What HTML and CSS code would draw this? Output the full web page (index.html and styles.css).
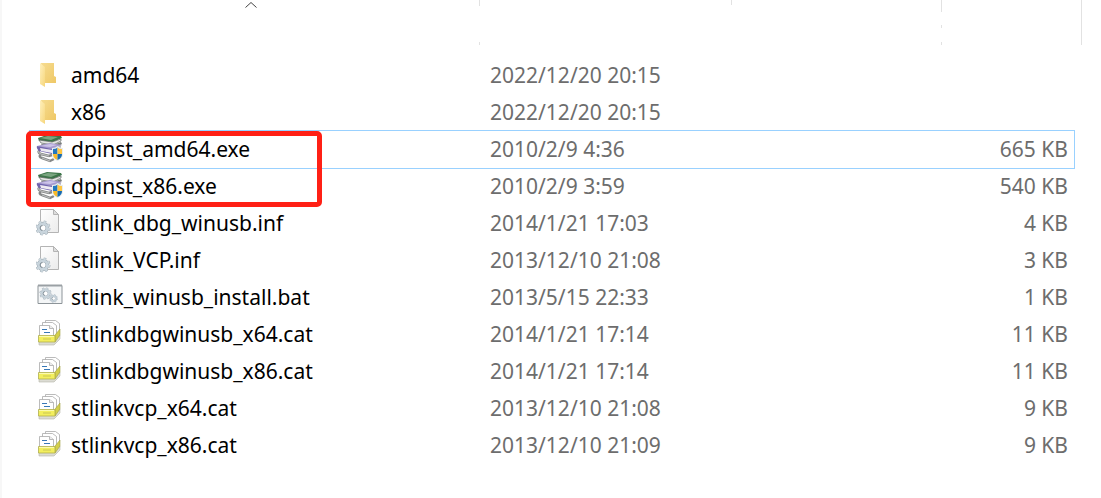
FILE: index.html
```html
<!DOCTYPE html>
<html lang="zh-CN">
<head>
  <meta charset="UTF-8" />
  <meta name="viewport" content="width=device-width, initial-scale=1.0" />
  <title>Files</title>
  <link rel="stylesheet" href="styles.css">
</head>
<body>
  <svg class="defs" aria-hidden="true">
    <linearGradient id="folderFace" x1="0" y1="0" x2="1" y2="1">
      <stop offset="0" stop-color="#fff0bd"/><stop offset="1" stop-color="#f6d67c"/>
    </linearGradient>
    <linearGradient id="folderBack" x1="0" y1="0" x2="1" y2="1">
      <stop offset="0" stop-color="#f6dc90"/><stop offset="1" stop-color="#efc866"/>
    </linearGradient>
    <linearGradient id="paper" x1="0" y1="0" x2="1" y2="1">
      <stop offset="0" stop-color="#ffffff"/><stop offset="1" stop-color="#ebebeb"/>
    </linearGradient>
    <symbol id="folder" viewBox="0 0 28 28">
      <path d="M5 2h13v13l2 1v6H8z" fill="url(#folderBack)"/>
      <path d="M4 2l5 4v20l-5-3z" fill="url(#folderFace)"/>
    </symbol>
    <symbol id="exe" viewBox="0 0 28 28">
      <path d="M5 14q-5 3 0 5l8 2 3-1M5 19q-3 3 1 4l8 3 4-2" fill="none" stroke="#858787" stroke-width="2.500"/>
      <path d="M5 14q-5 3 0 5l8 2M6 23l8 3" fill="none" stroke="#c6c8c8" stroke-width=".9"/>
      <path d="M2 3l9-3 14 1 1 2-9 4L3 6z" fill="#3c7548"/>
      <path d="M4 3l8-2 10 1-7 3z" fill="#7aa580"/>
      <path d="M3 5l13 2 9-3v2l-8 4-12-2z" fill="#e4e6e2" stroke="#5f6461" stroke-width=".7"/>
      <path d="M5 9l12 1 8-3 1 2-9 5-10-2z" fill="#797d7c"/>
      <path d="M1 11l13-3 12 2-9 4-12-1z" fill="#a599d0"/>
      <path d="M4 11l10-2 7 1-7 2z" fill="#cdc5e8"/>
      <path d="M1 11l15 3v5L3 16q-3-3-2-5z" fill="#7164ad"/>
      <path d="M4 13l12 2v3L5 16z" fill="#eeebf2"/>
      <path d="M16 14l9-4v3l-8 5z" fill="#b8b6c1"/>
      <path d="M16 13c3 0 4-1 5.500-2 1.500 1 3 2 5.500 2v6c0 4-3 6-5.500 7-3-1-5.500-3-5.500-7z" fill="#e7edf0"/>
      <path d="M17 14q3 0 4.500-1.500V19H17z" fill="#2478be"/>
      <path d="M21.500 12.500Q23 14 26 14v5h-4.500z" fill="#ffc642"/>
      <path d="M17 19h4.500v6Q17 23 17 19z" fill="#f9b928"/>
      <path d="M21.500 19H26q0 4-4.500 6z" fill="#176bb0"/>
    </symbol>
    <symbol id="cog" viewBox="-8 -8 16 16">
      <circle r="6.300" fill="none" stroke="#a9b4bc" stroke-width="2.400" stroke-dasharray="2.500 2.448"/>
      <circle r="4.300" fill="none" stroke="#a3afb8" stroke-width="3.800"/>
      <circle r="6" fill="none" stroke="#cdd8df" stroke-width="2" stroke-dasharray="2.100 2.612"/>
      <circle r="4.300" fill="none" stroke="#c8d4dc" stroke-width="2.600"/>
      <circle r="2.400" fill="#fff"/>
      <path d="M-.500-2.400a2.400 2.400 0 0 0 0 4.800" fill="none" stroke="#7f8b94"/>
    </symbol>
    <symbol id="inf" viewBox="0 0 28 28">
      <path d="M4.500.500h13l5 5v18h-18z" fill="url(#paper)" stroke="#b4b4b4"/>
      <path d="M17.500.500v5h5z" fill="#ddd" stroke="#b4b4b4"/>
      <use href="#cog" x="-1" y="11" width="16" height="16"/>
    </symbol>
    <symbol id="bat" viewBox="0 0 28 28">
      <path d="M2 2.500h24v18H2z" fill="#f4f6f7" stroke="#8d9499"/>
      <path d="M2 2.500h24" stroke="#9aa0a4" stroke-width="2"/>
      <use href="#cog" x="3" y="4" width="13" height="13"/>
      <use href="#cog" x="13" y="11" width="9" height="9"/>
    </symbol>
    <symbol id="cat" viewBox="0 0 28 28">
      <path d="M9.500.500h10l4 3v13h-14z" fill="#fff" stroke="#aaa" stroke-width=".8"/>
      <path d="M6.500 2.500h10l4 3v13h-14z" fill="#fff" stroke="#aaa" stroke-width=".8"/>
      <path d="M3.500 5.500h10l4 3v8h-14z" fill="#fff" stroke="#aaa" stroke-width=".8"/>
      <path d="M13.500 5.500v3h4" fill="#eee" stroke="#aaa" stroke-width=".8"/>
      <path d="M6 9.500h5M8 12.500h6" stroke="#3978b6"/>
      <path d="M18 21l6-6v4l-6 6H3v-4z" fill="#dcdcd4" stroke="#b5b5aa" stroke-width=".6"/>
      <path d="M19 15l5-6v6l-5 7z" fill="#d3cf4b" stroke="#a3a145" stroke-width=".6"/>
      <path d="M2.500 15.500H19v6.500H2.500z" fill="#f3ef5d" stroke="#b0ae4f" stroke-width=".8"/>
      <path d="M3 16.500h15" stroke="#fbfab0"/>
      <path d="M7 19h8" stroke="#c9c558"/>
    </symbol>
  </svg>

  <main class="explorer">
    <div class="columns">
      <div class="column column-name">
        <svg class="sort" viewBox="0 0 12 6"><path d="M.500 5.500L6 .500l5.500 5" fill="none" stroke="#444"/></svg>
      </div>
      <div class="column column-date"></div>
      <div class="column column-type"></div>
      <div class="column column-size"></div>
    </div>

    <div class="list">
      <table class="files">
        <tbody>
          <tr><td class="name"><svg class="icon"><use href="#folder"/></svg>amd64</td><td class="date">2022/12/20 20:15</td><td class="size"></td></tr>
          <tr><td class="name"><svg class="icon"><use href="#folder"/></svg>x86</td><td class="date">2022/12/20 20:15</td><td class="size"></td></tr>
          <tr class="focused"><td class="name"><svg class="icon"><use href="#exe"/></svg>dpinst_amd64.exe</td><td class="date">2010/2/9 4:36</td><td class="size">665 KB</td></tr>
          <tr><td class="name"><svg class="icon"><use href="#exe"/></svg>dpinst_x86.exe</td><td class="date">2010/2/9 3:59</td><td class="size">540 KB</td></tr>
          <tr><td class="name"><svg class="icon"><use href="#inf"/></svg>stlink_dbg_winusb.inf</td><td class="date">2014/1/21 17:03</td><td class="size">4 KB</td></tr>
          <tr><td class="name"><svg class="icon"><use href="#inf"/></svg>stlink_VCP.inf</td><td class="date">2013/12/10 21:08</td><td class="size">3 KB</td></tr>
          <tr><td class="name"><svg class="icon"><use href="#bat"/></svg>stlink_winusb_install.bat</td><td class="date">2013/5/15 22:33</td><td class="size">1 KB</td></tr>
          <tr><td class="name"><svg class="icon"><use href="#cat"/></svg>stlinkdbgwinusb_x64.cat</td><td class="date">2014/1/21 17:14</td><td class="size">11 KB</td></tr>
          <tr><td class="name"><svg class="icon"><use href="#cat"/></svg>stlinkdbgwinusb_x86.cat</td><td class="date">2014/1/21 17:14</td><td class="size">11 KB</td></tr>
          <tr><td class="name"><svg class="icon"><use href="#cat"/></svg>stlinkvcp_x64.cat</td><td class="date">2013/12/10 21:08</td><td class="size">9 KB</td></tr>
          <tr><td class="name"><svg class="icon"><use href="#cat"/></svg>stlinkvcp_x86.cat</td><td class="date">2013/12/10 21:09</td><td class="size">9 KB</td></tr>
        </tbody>
      </table>
      <!-- marks the two installers -->
      <div class="marker"></div>
    </div>
  </main>
</body>
</html>
```
FILE: styles.css
```css
body {
  margin: 0;
  background: #fff;
  color: #000;
  font-family: "Noto Sans", "Noto Sans CJK SC", sans-serif;
  font-size: 21px;
}
.defs {
  display: block;
  width: 0;
  height: 0;
}
.explorer {
  min-height: 100vh;
  box-sizing: border-box;
  border-left: 2px solid #f7f7f7;
}
.columns {
  display: flex;
  height: 45px;
  margin: 0 19px 12px 20px;
}
/* the column dividers are only partly visible */
.column {
  box-sizing: border-box;
  background-repeat: no-repeat;
  background-position: right top, right bottom, right 25px;
}
.column-name {
  width: 458px;
  text-align: center;
  line-height: 0;
  background-image: linear-gradient(#e2e2e2, #e2e2e2), linear-gradient(#e2e2e2, #e2e2e2);
  background-size: 1px 6px, 1px 3px;
}
.column-date {
  width: 252px;
  background-image: linear-gradient(#e2e2e2, #e2e2e2);
  background-size: 1px 5px;
}
.column-type {
  flex: 1;
  background-image: linear-gradient(#e2e2e2, #e2e2e2), linear-gradient(#e2e2e2, #e2e2e2), linear-gradient(#e2e2e2, #e2e2e2);
  background-size: 1px 12px, 1px 3px, 1px 3px;
}
.column-size {
  width: 140px;
  border-right: 1px solid #e2e2e2;
}
.sort {
  width: 12px;
  height: 6px;
}
.list {
  position: relative;
  margin: 0 27px 0 28px;
}
.files {
  width: 100%;
  border-collapse: collapse;
  table-layout: fixed;
}
.files td {
  height: 37px;
  padding: 0;
  line-height: 36px;
  vertical-align: top;
  white-space: nowrap;
}
.focused {
  outline: 1px solid #99d1ff;
}
.files .name {
  width: 450px;
}
.files .date {
  width: 320px;
  padding-left: 10px;
  color: #6d6d6d;
}
.files .size {
  padding-right: 6px;
  text-align: right;
  color: #6d6d6d;
}
.icon {
  width: 28px;
  height: 28px;
  margin: 0 7px 4px 6px;
  vertical-align: middle;
}
.marker {
  position: absolute;
  top: 74px;
  left: -4px;
  width: 296px;
  height: 76px;
  box-sizing: border-box;
  border: 5px solid #ff2015;
  border-radius: 5px;
  pointer-events: none;
}
```
